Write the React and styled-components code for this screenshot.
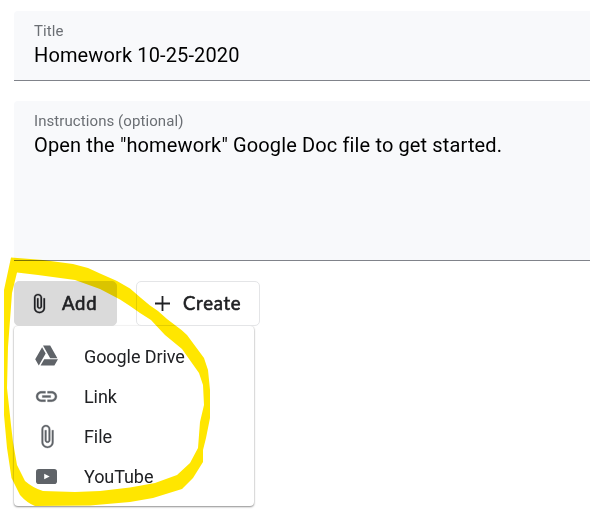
import React from 'react';
import styled, { createGlobalStyle } from 'styled-components';

const GlobalStyle = createGlobalStyle`
  * { box-sizing: border-box; }
  body {
    margin: 0;
    background: #fff;
    font-family: Roboto, sans-serif;
    overflow: hidden;
  }
`;

const Page = styled.main`
  position: relative;
  width: 590px;
  height: 520px;
  padding: 11px 0 0 14px;
  background: #fff;
  overflow: hidden;
`;

const Field = styled.section`
  height: ${(p) => p.$height}px;
  margin-bottom: 20px;
  padding: 10px 20px 0;
  background: #f8f9fb;
  border-bottom: 1px solid #80838a;
  border-top-left-radius: 4px;
`;

const FieldLabel = styled.div`
  font-size: 15px;
  line-height: 20px;
  letter-spacing: 0.08px;
  color: #6b6f74;
`;

const FieldValue = styled.div`
  margin-top: 1px;
  font-size: 20px;
  line-height: 27px;
  letter-spacing: 0.13px;
  color: #000;
  white-space: nowrap;
`;

const Actions = styled.div`
  display: flex;
  gap: 19px;
`;

const Button = styled.button`
  display: flex;
  align-items: center;
  width: ${(p) => p.$width}px;
  height: 45px;
  padding: 0 0 0 ${(p) => p.$inset}px;
  gap: ${(p) => p.$gap}px;
  border: 1px solid ${(p) => (p.$active ? '#dadada' : '#e4e5e7')};
  border-radius: 5px;
  background: ${(p) => (p.$active ? '#dadada' : '#fff')};
  color: #202124;
  font: 400 18.5px/24px Lato, sans-serif;
  -webkit-text-stroke: 0.6px #202124;
  letter-spacing: ${(p) => p.$spacing}px;
  svg { flex: none; }
`;

const ButtonText = styled.span`
  padding-bottom: 2px;
`;

const Menu = styled.ul`
  width: 240px;
  height: 180px;
  margin: 0;
  padding: 10px 0;
  list-style: none;
  background: #fff;
  border-radius: 4px;
  box-shadow: 0 1px 2px rgba(0, 0, 0, 0.42), 0 0 2px rgba(0, 0, 0, 0.12);
`;

const MenuItem = styled.li`
  display: flex;
  align-items: center;
  height: 40px;
  padding-left: 20px;
  font-size: 18px;
  letter-spacing: -0.08px;
  color: #202124;
`;

const IconSlot = styled.span`
  display: flex;
  justify-content: center;
  width: 25px;
  margin-right: 25px;
  color: #5f6368;
  svg { flex: none; }
`;

const Marker = styled.svg`
  position: absolute;
  inset: 0;
  mix-blend-mode: multiply;
  pointer-events: none;
`;

const Clip = ({ width = 26, height = 25 }) => (
  <svg width={width} height={height} viewBox="0 0 24 24" preserveAspectRatio="none" fill="currentColor" stroke="currentColor" strokeWidth="0.3">
    <path d="M16.5 6v11.5c0 2.210-1.790 4-4 4s-4-1.790-4-4V5c0-1.380 1.120-2.500 2.500-2.500s2.500 1.120 2.500 2.500v10.500c0 .55-.45 1-1 1s-1-.45-1-1V6H10v9.500c0 1.380 1.120 2.500 2.500 2.500s2.500-1.120 2.500-2.500V5c0-2.210-1.790-4-4-4S7 2.790 7 5v12.500c0 3.040 2.460 5.500 5.500 5.500s5.500-2.460 5.500-5.500V6h-1.500z" />
  </svg>
);

const Plus = () => (
  <svg width="15" height="15" viewBox="0 0 15 15" fill="none" stroke="currentColor" strokeWidth="1.8">
    <path d="M7.500 0v15M0 7.500h15" />
  </svg>
);

const Drive = () => (
  <svg width="25.200" height="25.200" viewBox="0 -0.500 24 24" fill="currentColor">
    <path d="M7.710 3.500 1.150 15l3.430 6 6.550-11.500zM9.730 15 6.300 21h13.120l3.430-6zM22.280 14 15.420 2H8.580l6.860 12z" />
  </svg>
);

const Link = () => (
  <svg width="25" height="25" viewBox="0 0 24 24" fill="currentColor" stroke="currentColor" strokeWidth="0.3">
    <path d="M3.900 12c0-1.710 1.390-3.100 3.100-3.100h4V7H7c-2.760 0-5 2.240-5 5s2.240 5 5 5h4v-1.900H7c-1.710 0-3.100-1.390-3.100-3.100zM8 13h8v-2H8v2zm9-6h-4v1.900h4c1.710 0 3.100 1.390 3.100 3.100s-1.390 3.100-3.100 3.100h-4V17h4c2.760 0 5-2.240 5-5s-2.240-5-5-5z" />
  </svg>
);

const YouTube = () => (
  <svg width="21" height="15" viewBox="0 0 21 15">
    <rect width="21" height="15" rx="2.800" fill="currentColor" />
    <path d="M8.200 4.700v5.600l5.500-2.800Z" fill="#fff" />
  </svg>
);

const items = [
  { label: 'Google Drive', Icon: Drive },
  { label: 'Link', Icon: Link },
  { label: 'File', Icon: Clip },
  { label: 'YouTube', Icon: YouTube },
];

export default function App() {
  return (
    <>
      <GlobalStyle />
      <Page>
        <Field $height={70}>
          <FieldLabel>Title</FieldLabel>
          <FieldValue>Homework 10-25-2020</FieldValue>
        </Field>
        <Field $height={160}>
          <FieldLabel>Instructions (optional)</FieldLabel>
          <FieldValue>Open the "homework" Google Doc file to get started.</FieldValue>
        </Field>
        <Actions>
          <Button $active $width={103} $inset={12} $gap={11} $spacing={0.8}>
            <Clip width={24} height={21} />
            <ButtonText>Add</ButtonText>
          </Button>
          <Button $width={124} $inset={18} $gap={13} $spacing={0.75}>
            <Plus />
            <ButtonText>Create</ButtonText>
          </Button>
        </Actions>
        <Menu>
          {items.map(({ label, Icon }) => (
            <MenuItem key={label}>
              <IconSlot><Icon /></IconSlot>
              {label}
            </MenuItem>
          ))}
        </Menu>
        <Marker width="590" height="520" viewBox="0 0 590 520">
          <path
            fill="#ffe600"
            fillRule="evenodd"
            d="M11 257.500 43 260 73 264 88 268 100 273.500 117 281 130 288.500 141 298 150 305.500 158 311 167 319 181.500 330 187 335 204 358 208 370 210 390 210 418 206 438 203 450 203 462 193 478 182 489 153 498 130 502 90 505.500 35 506 Q27 503 20 495 L11.500 478 7 448 4 415 4 290Z
            M17 272.500 38 275 75 280 100 289 120 299.500 130 306 140 313 151 320 157 326.500 165 335 182 349 199 373 203 385 204 405 200 422 198 448 190 463 177 475 155 483 130 487.500 100 491 75 492 43 491 Q33 488 25 481 L17 465 13 442 11 425 7 388 8 347 12 293Z"
          />
        </Marker>
      </Page>
    </>
  );
}
